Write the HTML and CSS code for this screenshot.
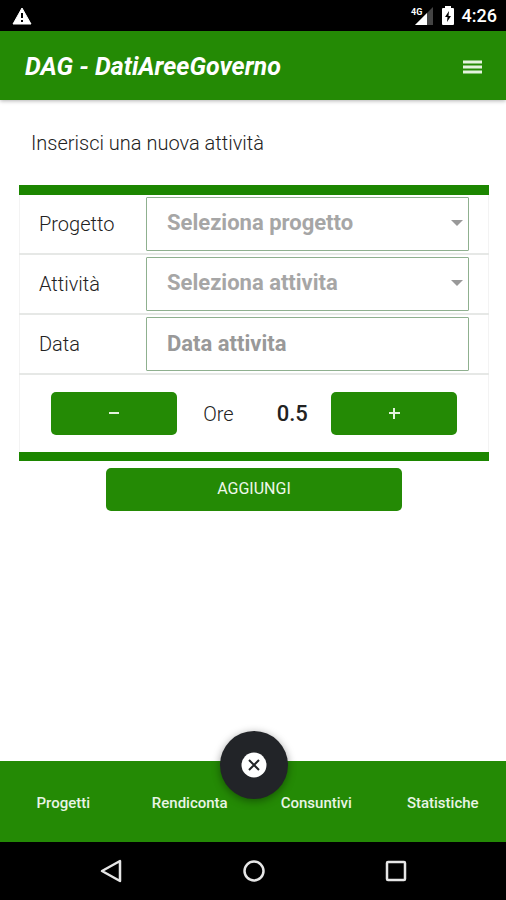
FILE: index.html
```html
<!DOCTYPE html>
<html lang="it">
<head>
<meta charset="utf-8">
<meta name="viewport" content="width=device-width, initial-scale=1">
<title>DAG - DatiAreeGoverno</title>
<link rel="stylesheet" href="styles.css">
</head>
<body>
<div class="status-bar">
  <svg class="status-warning" width="20" height="18" viewBox="0 0 20 18" aria-hidden="true">
    <path d="M10 1 19 17H1Z" fill="#fff" stroke="#fff" stroke-linejoin="round"/>
    <path d="M10 6v5M10 13v2" stroke="#000" stroke-width="2"/>
  </svg>
  <div class="status-icons">
    <svg width="24" height="20" viewBox="0 0 24 20" aria-hidden="true">
      <path d="M5 19 23 1v18Z" fill="#444"/>
      <path d="M5 19 17 7v12Z" fill="#fff"/>
      <path d="M0 1h13v8l-4 3H0Z" fill="#000"/>
      <text class="network" x="1" y="9">4G</text>
    </svg>
    <svg width="12" height="19" viewBox="0 0 12 19" aria-hidden="true">
      <path d="M3 0h6v2h2q1 0 1 1v15q0 1-1 1H1q-1 0-1-1V3q0-1 1-1h2Z" fill="#fff"/>
      <path d="M7 5 3 11h2.500L5 16l4-6H6.500Z" fill="#000"/>
    </svg>
    <span class="clock">4:26</span>
  </div>
</div>

<header class="app-header">
  <h1 class="app-title">DAG - DatiAreeGoverno</h1>
  <button class="icon-button" type="button" aria-label="Menu">
    <svg width="20" height="16" viewBox="0 0 20 16" aria-hidden="true">
      <path d="M0 3h19M0 8h19M0 13h19" stroke="#e4f3df" stroke-width="3"/>
    </svg>
  </button>
</header>

<main class="content">
  <h2 class="page-title">Inserisci una nuova attività</h2>
  <form>
    <div class="card">
      <div class="row">
        <label for="progetto">Progetto</label>
        <div class="field">
          <select class="control" id="progetto"><option>Seleziona progetto</option></select>
          <svg class="caret" width="12" height="6" viewBox="0 0 12 6" aria-hidden="true"><path d="M0 0h12L6 6Z" fill="#999"/></svg>
        </div>
      </div>
      <div class="row">
        <label for="attivita">Attività</label>
        <div class="field">
          <select class="control" id="attivita"><option>Seleziona attivita</option></select>
          <svg class="caret" width="12" height="6" viewBox="0 0 12 6" aria-hidden="true"><path d="M0 0h12L6 6Z" fill="#999"/></svg>
        </div>
      </div>
      <div class="row">
        <label for="data">Data</label>
        <div class="field">
          <input class="control" id="data" type="text" placeholder="Data attivita">
        </div>
      </div>
      <div class="stepper">
        <button class="button" type="button" aria-label="Diminuisci ore">
          <svg width="12" height="12" viewBox="0 0 12 12" aria-hidden="true"><path d="M1 5h10" stroke="#e4f3df" stroke-width="2"/></svg>
        </button>
        <div class="hours">
          <span>Ore</span>
          <output class="hours-value">0.5</output>
        </div>
        <button class="button" type="button" aria-label="Aumenta ore">
          <svg width="12" height="12" viewBox="0 0 12 12" aria-hidden="true"><path d="M1 5h11M6 0v11" stroke="#e4f3df" stroke-width="2"/></svg>
        </button>
      </div>
    </div>
    <button class="button submit" type="submit">AGGIUNGI</button>
  </form>
</main>

<nav class="tab-bar">
  <a href="#progetti">Progetti</a>
  <a href="#rendiconta">Rendiconta</a>
  <a href="#consuntivi">Consuntivi</a>
  <a href="#statistiche">Statistiche</a>
  <button class="fab" type="button" aria-label="Chiudi">
    <svg width="26" height="26" viewBox="0 0 26 26" aria-hidden="true">
      <circle cx="13" cy="13" r="12.500" fill="#fff"/>
      <path d="m8 8 10 10M18 8 8 18" stroke="#222428" stroke-width="2"/>
    </svg>
  </button>
</nav>

<div class="system-nav">
  <button class="icon-button" type="button" aria-label="Indietro">
    <svg width="24" height="26" viewBox="0 0 24 26" aria-hidden="true"><path d="M20 3v20L2 13Z" fill="none" stroke="#e6e6e6" stroke-width="2.500" stroke-linejoin="round"/></svg>
  </button>
  <button class="icon-button" type="button" aria-label="Home">
    <svg width="24" height="24" viewBox="0 0 24 24" aria-hidden="true"><circle cx="12" cy="12" r="9.500" fill="none" stroke="#e6e6e6" stroke-width="2.500"/></svg>
  </button>
  <button class="icon-button" type="button" aria-label="Recenti">
    <svg width="24" height="24" viewBox="0 0 24 24" aria-hidden="true"><rect x="3" y="3" width="18" height="18" rx="1" fill="none" stroke="#e6e6e6" stroke-width="2.500"/></svg>
  </button>
</div>
</body>
</html>
```
FILE: styles.css
```css
:root {
  --green: #248a05;
  --bar-green: #1c8600;
  --line: #e6e8e6;
}

* {
  box-sizing: border-box;
}

body {
  margin: 0;
  min-height: 100vh;
  display: flex;
  flex-direction: column;
  background: #fff;
  color: #222;
  font-family: Roboto, "Liberation Sans", sans-serif;
  font-size: 20px;
  line-height: 24px;
}

button {
  font: inherit;
  border: 0;
  padding: 0;
}

svg {
  display: block;
}

.status-bar {
  display: flex;
  align-items: center;
  justify-content: space-between;
  height: 31px;
  padding: 0 9px 0 12px;
  background: #000;
  color: #fff;
}

.status-icons {
  display: flex;
  align-items: center;
  gap: 8px;
}

.network {
  font-size: 9px;
  font-weight: 700;
  fill: #fff;
}

.clock {
  font-size: 18px;
  font-weight: 500;
}

.app-header {
  display: flex;
  align-items: center;
  justify-content: space-between;
  height: 69px;
  padding: 2px 23px 0 25px;
  background: var(--green);
  box-shadow: 0 1px 4px rgba(0, 0, 0, 0.3);
}

.app-title {
  margin: 0;
  color: #fff;
  font-size: 25px;
  font-style: italic;
  font-weight: 700;
}

.icon-button {
  background: none;
}

.content {
  flex: 1;
  padding: 31px 17px 32px 19px;
}

.page-title {
  margin: 0 12px 30px;
  font-size: 20px;
  font-weight: 300;
}

.card {
  border-top: 10px solid var(--bar-green);
  border-bottom: 9px solid var(--bar-green);
}

.row,
.stepper {
  display: grid;
  align-items: center;
  box-shadow: inset 1px 0 #f3f3f3, inset -1px 0 #f3f3f3;
}

.row {
  grid-template-columns: 107px 1fr;
  padding: 2px 20px;
  border-bottom: 2px solid var(--line);
}

.row label {
  font-weight: 300;
}

.field {
  position: relative;
}

.control {
  display: block;
  width: 100%;
  height: 54px;
  margin: 0;
  padding: 0 20px 2px;
  appearance: none;
  border: 1px solid #8fb08f;
  border-radius: 1px;
  background: #fff;
  color: #a6a6a6;
  font: inherit;
  font-size: 22px;
  font-weight: 700;
}

.control::placeholder {
  color: #999;
  opacity: 1;
}

.caret {
  position: absolute;
  top: 23px;
  right: 6px;
  pointer-events: none;
}

.stepper {
  grid-template-columns: 126px 1fr 126px;
  padding: 17px 32px;
}

.hours {
  display: flex;
  justify-content: center;
  gap: 43px;
  padding-left: 3px;
  font-weight: 300;
}

.hours-value {
  font-size: 22px;
  font-weight: 500;
}

.button {
  display: flex;
  align-items: center;
  justify-content: center;
  height: 43px;
  border-radius: 5px;
  background: var(--green);
  color: #eef8ea;
}

.submit {
  width: 63%;
  margin: 7px auto 0;
  padding-bottom: 2px;
  font-size: 16px;
}

.tab-bar {
  position: relative;
  display: grid;
  grid-template-columns: repeat(4, 1fr);
  align-items: center;
  height: 81px;
  padding-top: 2px;
  background: var(--green);
  text-align: center;
}

.tab-bar a {
  color: #e8f5e4;
  font-size: 15px;
  font-weight: 500;
  text-decoration: none;
}

.fab {
  position: absolute;
  top: -30px;
  left: 50%;
  display: flex;
  align-items: center;
  justify-content: center;
  width: 68px;
  height: 68px;
  margin-left: -33px;
  border-radius: 50%;
  background: #222428;
  box-shadow: 0 2px 8px rgba(0, 0, 0, 0.4);
}

.system-nav {
  display: flex;
  align-items: center;
  justify-content: space-between;
  height: 58px;
  padding: 0 98px 0 100px;
  background: #000;
}
```
